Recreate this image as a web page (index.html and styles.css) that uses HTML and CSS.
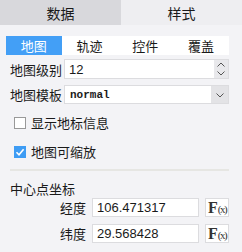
FILE: index.html
```html
<!DOCTYPE html>
<html lang="zh">
<head>
  <meta charset="UTF-8">
  <meta name="viewport" content="width=device-width, initial-scale=1.0">
  <title>地图设置</title>
  <link rel="stylesheet" href="styles.css">
</head>
<body>
  <div class="tabs">
    <div class="tab">数据</div>
    <div class="tab on">样式</div>
  </div>

  <div class="panel">
    <div class="subtabs">
      <div class="sub active">地图</div>
      <div class="sub">轨迹</div>
      <div class="sub">控件</div>
      <div class="sub">覆盖</div>
    </div>

    <div class="row">
      <label class="lbl">地图级别</label>
      <div class="field">
        <span class="val">12</span>
        <span class="spin">
          <svg width="10" height="16" viewBox="0 0 10 16"><path d="M1.5 5.5 L5 2 L8.5 5.5" fill="none" stroke="#555" stroke-width="1"/><path d="M1.5 10.5 L5 14 L8.5 10.5" fill="none" stroke="#555" stroke-width="1"/></svg>
        </span>
      </div>
    </div>

    <div class="row">
      <label class="lbl">地图模板</label>
      <div class="field sel">
        <span class="val mono">normal</span>
        <span class="drop">
          <svg width="10" height="8" viewBox="0 0 10 8"><path d="M1.5 2.5 L5 6 L8.5 2.5" fill="none" stroke="#555" stroke-width="1"/></svg>
        </span>
      </div>
    </div>

    <div class="check">
      <span class="box"></span>
      <span>显示地标信息</span>
    </div>
    <div class="check">
      <span class="box checked">
        <svg width="12" height="12" viewBox="0 0 12 12"><path d="M2.5 6.2 L5 8.7 L9.6 3.2" fill="none" stroke="#fff" stroke-width="1.6"/></svg>
      </span>
      <span>地图可缩放</span>
    </div>

    <div class="sep"></div>

    <div class="title">中心点坐标</div>

    <div class="coord">
      <label class="clbl">经度</label>
      <div class="cinput">106.471317</div>
      <div class="fx">F<small>(x)</small></div>
    </div>
    <div class="coord">
      <label class="clbl">纬度</label>
      <div class="cinput">29.568428</div>
      <div class="fx">F<small>(x)</small></div>
    </div>
  </div>
</body>
</html>
```

FILE: styles.css
```css
*{
  box-sizing: border-box;
}
body{
  margin: 0;
  width: 242px;
  height: 252px;
  overflow: hidden;
  background-color: #f3f3f6;
  font-family: "Noto Sans CJK SC", "Liberation Sans", sans-serif;
  font-size: 13px;
  color: #1a1a1a;
}
.tabs{
  display: flex;
  height: 25px;
}
.tab{
  flex: 1;
  display: flex;
  align-items: center;
  justify-content: center;
  background-color: #d8d8dc;
  font-size: 14px;
}
.tab.on{
  background-color: #eeeef1;
}

.panel{
  padding: 11px 13px 0 6px;
}
.subtabs{
  display: flex;
  height: 19px;
  background-color: #fff;
}
.sub{
  flex: 1;
  display: flex;
  align-items: center;
  justify-content: center;
  font-size: 13px;
}
.sub.active{
  background-color: #439ff6;
  color: #fff;
}

.row{
  display: flex;
  align-items: center;
  margin-top: 4px;
  padding-left: 4px;
}
.row + .row{
  margin-top: 6px;
}
.lbl{
  width: 54px;
  font-size: 13px;
}
.field{
  flex: 1;
  height: 20px;
  display: flex;
  align-items: stretch;
  background-color: #fff;
  border: 1px solid #dcdcdf;
}
.field .val{
  flex: 1;
  display: flex;
  align-items: center;
  padding-left: 4px;
  font-family: "Liberation Sans", sans-serif;
  font-size: 13px;
}
.field .mono{
  font-family: "Liberation Mono", monospace;
  font-size: 11px;
  font-weight: bold;
  padding-left: 5px;
}
.spin{
  width: 14px;
  display: flex;
  align-items: center;
  justify-content: center;
  background-color: #e8e8eb;
}
.drop{
  width: 17px;
  display: flex;
  align-items: center;
  justify-content: center;
  background-color: #e3e3e6;
}
.sel{
  height: 19px;
}

.check{
  display: flex;
  align-items: center;
  gap: 5px;
  margin-top: 12px;
  padding-left: 8px;
  height: 13px;
}
.check + .check{
  margin-top: 16px;
}
.box{
  width: 12px;
  height: 12px;
  border: 1px solid #999;
  background-color: #fff;
  display: flex;
}
.box.checked{
  border: none;
  background-color: #3e9cf4;
}

.sep{
  height: 2px;
  margin: 11px 0 0 4px;
  background-color: #e6e6e3;
}
.title{
  margin-top: 9px;
  padding-left: 4px;
  line-height: 17px;
}
.coord{
  display: flex;
  align-items: center;
  gap: 6px;
  margin-top: 1px;
}
.coord + .coord{
  margin-top: 7px;
}
.clbl{
  width: 80px;
  text-align: right;
}
.cinput{
  width: 107px;
  height: 19px;
  display: flex;
  align-items: center;
  padding-left: 4px;
  background-color: #fff;
  border: 1px solid #dcdcdf;
  font-family: "Liberation Sans", sans-serif;
  font-size: 13px;
}
.fx{
  width: 24px;
  height: 19px;
  display: flex;
  align-items: center;
  justify-content: center;
  background-color: #fff;
  border: 1px solid #dcdcdf;
  font-family: "Liberation Serif", serif;
  font-size: 16px;
  font-weight: bold;
  color: #333;
}
.fx small{
  font-size: 11px;
  font-weight: normal;
  letter-spacing: -1.5px;
  margin-top: 2px;
}
```
